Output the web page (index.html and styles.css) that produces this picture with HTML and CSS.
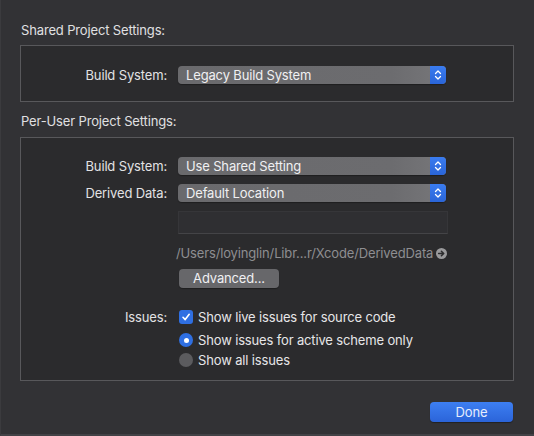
FILE: index.html
```html
<!DOCTYPE html>
<html>
<head>
<meta charset="utf-8">
<link rel="stylesheet" href="styles.css">
</head>
<body>
<div class="window">
  <div class="section-title first">Shared Project Settings:</div>
  <div class="box box-shared">
    <div class="row">
      <div class="label">Build System:</div>
      <div class="popup"><span class="popup-text">Legacy Build System</span><span class="stepper"><svg width="8" height="12" viewBox="0 0 8 12"><path d="M1.5 4.5 L4 2 L6.5 4.5 M1.5 7.5 L4 10 L6.5 7.5" fill="none" stroke="#fff" stroke-width="1.3" stroke-linecap="round" stroke-linejoin="round"/></svg></span></div>
    </div>
  </div>
  <div class="section-title">Per-User Project Settings:</div>
  <div class="box box-user">
    <div class="row">
      <div class="label">Build System:</div>
      <div class="popup"><span class="popup-text">Use Shared Setting</span><span class="stepper"><svg width="8" height="12" viewBox="0 0 8 12"><path d="M1.5 4.5 L4 2 L6.5 4.5 M1.5 7.5 L4 10 L6.5 7.5" fill="none" stroke="#fff" stroke-width="1.3" stroke-linecap="round" stroke-linejoin="round"/></svg></span></div>
    </div>
    <div class="row row-derived">
      <div class="label">Derived Data:</div>
      <div class="popup"><span class="popup-text">Default Location</span><span class="stepper"><svg width="8" height="12" viewBox="0 0 8 12"><path d="M1.5 4.5 L4 2 L6.5 4.5 M1.5 7.5 L4 10 L6.5 7.5" fill="none" stroke="#fff" stroke-width="1.3" stroke-linecap="round" stroke-linejoin="round"/></svg></span></div>
    </div>
    <div class="row row-field">
      <div class="label"></div>
      <div class="field"></div>
    </div>
    <div class="row row-path">
      <div class="label"></div>
      <div class="path">/Users/loyinglin/Libr...r/Xcode/DerivedData<svg class="go" width="11" height="11" viewBox="0 0 11 11"><circle cx="5.5" cy="5.5" r="5.5" fill="#9a9a9c"/><path d="M2.6 5.5 H7.6 M5.4 3.2 L7.7 5.5 L5.4 7.8" fill="none" stroke="#2c2c2e" stroke-width="1.5" stroke-linecap="round" stroke-linejoin="round"/></svg></div>
    </div>
    <div class="row row-adv">
      <div class="label"></div>
      <div><div class="button">Advanced...</div></div>
    </div>
    <div class="row row-issues">
      <div class="label">Issues:</div>
      <div class="option"><span class="checkbox"><svg width="10" height="10" viewBox="0 0 10 10"><path d="M2 5.3 L4.2 7.6 L8.2 2.3" fill="none" stroke="#fff" stroke-width="1.6" stroke-linecap="round" stroke-linejoin="round"/></svg></span>Show live issues for source code</div>
    </div>
    <div class="row row-radio1">
      <div class="label"></div>
      <div class="option"><span class="radio on"></span>Show issues for active scheme only</div>
    </div>
    <div class="row row-radio2">
      <div class="label"></div>
      <div class="option"><span class="radio"></span>Show all issues</div>
    </div>
  </div>
  <div class="footer">
    <div class="done">Done</div>
  </div>
</div>
</body>
</html>
```
FILE: styles.css
```css
html, body {
  margin: 0;
  padding: 0;
  background: #323235;
  overflow: hidden;
}
body {
  width: 534px;
  height: 436px;
  font-family: Inter, "Noto Sans", sans-serif;
  font-size: 13px;
  letter-spacing: -0.15px;
  color: #e2e2e4;
}
.window {
  box-sizing: border-box;
  width: 534px;
  height: 436px;
  overflow: hidden;
  padding: 0 20px;
  border-left: 1px solid #3b3b3e;
  border-bottom: 2px solid #424246;
  background: #323235;
}
.section-title {
  height: 16px;
  line-height: 16px;
  margin-top: 22px;
  margin-bottom: 7px;
  color: #e0e0e2;
}
.section-title.first {
  margin-top: 22px;
}
.section-title:not(.first) {
  margin-top: 11px;
  margin-bottom: 8px;
}
.box {
  box-sizing: border-box;
  width: 494px;
  border: 1px solid #58585b;
  background: #2b2b2d;
  margin-left: -1px;
}
.box-shared {
  padding: 19px 0;
  height: 57px;
}
.box-user {
  padding-top: 19px;
  height: 244px;
}
.row {
  display: grid;
  grid-template-columns: 146px 1fr;
  column-gap: 11px;
  align-items: center;
}
.box-shared .row {
  margin-top: 1px;
}
.label {
  text-align: right;
  color: #e2e2e4;
  line-height: 18px;
}
.popup {
  position: relative;
  box-sizing: border-box;
  width: 268px;
  height: 18px;
  border-radius: 4px;
  background: linear-gradient(90deg, #6a6a6d 0%, #6c6c6f 80%, #77777a 100%);
  display: flex;
  align-items: center;
  justify-content: space-between;
  box-shadow: 0 1px 1px rgba(0,0,0,0.3);
}
.popup-text {
  padding-left: 8px;
  color: #f0f0f2;
  line-height: 18px;
}
.stepper {
  width: 16px;
  height: 18px;
  border-radius: 0 4px 4px 0;
  background: linear-gradient(180deg, #3a7cf0, #2a65d8);
  display: flex;
  align-items: center;
  justify-content: center;
}
.row-derived {
  margin-top: 9px;
}
.row-field {
  margin-top: 9px;
}
.field {
  box-sizing: border-box;
  width: 270px;
  height: 23px;
  background: #2f2f32;
  border: 1px solid #363639;
  border-bottom-color: #444447;
}
.row-path {
  margin-top: 11px;
}
.path {
  margin-left: -2px;
  color: #8e8e91;
  line-height: 16px;
  display: flex;
  align-items: center;
  white-space: nowrap;
}
.go {
  margin-left: 3px;
}
.row-adv {
  margin-top: 8px;
}
.button {
  box-sizing: border-box;
  width: 100px;
  height: 19px;
  line-height: 19px;
  border-radius: 4px;
  background: #67676a;
  color: #f0f0f2;
  text-align: center;
  margin-left: 1px;
  box-shadow: 0 1px 1px rgba(0,0,0,0.3);
}
.row-issues {
  margin-top: 20px;
}
.row-radio1 {
  margin-top: 5px;
}
.row-radio2 {
  margin-top: 2px;
}
.option {
  display: flex;
  align-items: center;
  line-height: 18px;
  color: #e6e6e8;
  margin-left: 1px;
}
.checkbox {
  box-sizing: border-box;
  width: 14px;
  height: 14px;
  border-radius: 3px;
  background: #2f6fe2;
  display: flex;
  align-items: center;
  justify-content: center;
  margin-right: 5px;
}
.radio {
  box-sizing: border-box;
  width: 14px;
  height: 14px;
  border-radius: 50%;
  background: #5b5b5e;
  margin-right: 5px;
  position: relative;
}
.radio.on {
  background: #2f6fe2;
}
.radio.on::after {
  content: "";
  position: absolute;
  left: 4.5px;
  top: 4.5px;
  width: 5px;
  height: 5px;
  border-radius: 50%;
  background: #fff;
}
.footer {
  display: flex;
  justify-content: flex-end;
  margin-top: 21px;
  margin-right: 1px;
}
.done {
  width: 83px;
  height: 20px;
  line-height: 20px;
  border-radius: 4px;
  background: linear-gradient(180deg, #3d7ff2, #2b64d9);
  color: #e6edfc;
  text-align: center;
  box-shadow: 0 1px 1px rgba(0,0,0,0.35);
}
```
